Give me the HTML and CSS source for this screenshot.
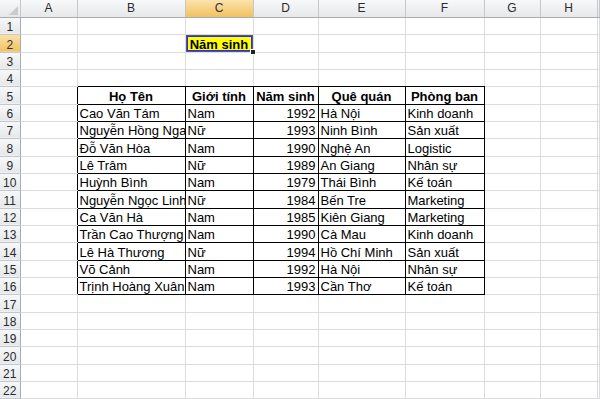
FILE: index.html
```html
<!DOCTYPE html>
<html lang="vi">
<head>
    <meta charset="UTF-8">
    <meta name="viewport" content="width=device-width, initial-scale=1.0">
    <title>Danh sách nhân viên</title>
    <link rel="stylesheet" href="styles.css">
</head>
<body>

<!-- Sheet grid -->
<table class="sheet">
    <colgroup>
        <col class="w-rh">
        <col class="w-a">
        <col class="w-b">
        <col class="w-c">
        <col class="w-d">
        <col class="w-e">
        <col class="w-f">
        <col class="w-g">
        <col class="w-h">
        <col>
    </colgroup>

    <!-- Column headers -->
    <tr class="hdr">
        <th class="corner"></th>
        <th>A</th>
        <th>B</th>
        <th class="sel">C</th>
        <th>D</th>
        <th>E</th>
        <th>F</th>
        <th>G</th>
        <th>H</th>
        <th></th>
    </tr>

    <tr class="r17"><th class="rh">1</th><td></td><td></td><td></td><td></td><td></td><td></td><td></td><td></td><td></td></tr>
    <tr class="r18"><th class="rh sel">2</th><td></td><td></td><td class="active">Năm sinh</td><td></td><td></td><td></td><td></td><td></td><td></td></tr>
    <tr class="r17"><th class="rh">3</th><td></td><td></td><td></td><td></td><td></td><td></td><td></td><td></td><td></td></tr>
    <tr class="r17"><th class="rh">4</th><td></td><td class="tp"></td><td class="tp"></td><td class="tp"></td><td class="tp"></td><td class="tp"></td><td></td><td></td><td></td></tr>

    <!-- Data table B5:F16 -->
    <tr class="r18 head"><th class="rh">5</th><td class="l"></td><td class="t">Họ Tên</td><td class="t">Giới tính</td><td class="t">Năm sinh</td><td class="t">Quê quán</td><td class="t">Phòng ban</td><td></td><td></td><td></td></tr>
    <tr class="r17"><th class="rh">6</th><td class="l"></td><td class="t">Cao Văn Tám</td><td class="t">Nam</td><td class="t num">1992</td><td class="t">Hà Nội</td><td class="t">Kinh doanh</td><td></td><td></td><td></td></tr>
    <tr class="r17"><th class="rh">7</th><td class="l"></td><td class="t">Nguyễn Hồng Nga</td><td class="t">Nữ</td><td class="t num">1993</td><td class="t">Ninh Bình</td><td class="t">Sản xuất</td><td></td><td></td><td></td></tr>
    <tr class="r18"><th class="rh">8</th><td class="l"></td><td class="t">Đỗ Văn Hòa</td><td class="t">Nam</td><td class="t num">1990</td><td class="t">Nghệ An</td><td class="t">Logistic</td><td></td><td></td><td></td></tr>
    <tr class="r17"><th class="rh">9</th><td class="l"></td><td class="t">Lê Trâm</td><td class="t">Nữ</td><td class="t num">1989</td><td class="t">An Giang</td><td class="t">Nhân sự</td><td></td><td></td><td></td></tr>
    <tr class="r17"><th class="rh">10</th><td class="l"></td><td class="t">Huỳnh Bình</td><td class="t">Nam</td><td class="t num">1979</td><td class="t">Thái Bình</td><td class="t">Kế toán</td><td></td><td></td><td></td></tr>
    <tr class="r18"><th class="rh">11</th><td class="l"></td><td class="t">Nguyễn Ngọc Linh</td><td class="t">Nữ</td><td class="t num">1984</td><td class="t">Bến Tre</td><td class="t">Marketing</td><td></td><td></td><td></td></tr>
    <tr class="r17"><th class="rh">12</th><td class="l"></td><td class="t">Ca Văn Hà</td><td class="t">Nam</td><td class="t num">1985</td><td class="t">Kiên Giang</td><td class="t">Marketing</td><td></td><td></td><td></td></tr>
    <tr class="r17"><th class="rh">13</th><td class="l"></td><td class="t">Trần Cao Thượng</td><td class="t">Nam</td><td class="t num">1990</td><td class="t">Cà Mau</td><td class="t">Kinh doanh</td><td></td><td></td><td></td></tr>
    <tr class="r18"><th class="rh">14</th><td class="l"></td><td class="t">Lê Hà Thương</td><td class="t">Nữ</td><td class="t num">1994</td><td class="t">Hồ Chí Minh</td><td class="t">Sản xuất</td><td></td><td></td><td></td></tr>
    <tr class="r17"><th class="rh">15</th><td class="l"></td><td class="t">Võ Cảnh</td><td class="t">Nam</td><td class="t num">1992</td><td class="t">Hà Nội</td><td class="t">Nhân sự</td><td></td><td></td><td></td></tr>
    <tr class="r17"><th class="rh">16</th><td class="l"></td><td class="t">Trịnh Hoàng Xuân</td><td class="t">Nam</td><td class="t num">1993</td><td class="t">Cần Thơ</td><td class="t">Kế toán</td><td></td><td></td><td></td></tr>

    <tr class="r18"><th class="rh">17</th><td></td><td></td><td></td><td></td><td></td><td></td><td></td><td></td><td></td></tr>
    <tr class="r17"><th class="rh">18</th><td></td><td></td><td></td><td></td><td></td><td></td><td></td><td></td><td></td></tr>
    <tr class="r17"><th class="rh">19</th><td></td><td></td><td></td><td></td><td></td><td></td><td></td><td></td><td></td></tr>
    <tr class="r18"><th class="rh">20</th><td></td><td></td><td></td><td></td><td></td><td></td><td></td><td></td><td></td></tr>
    <tr class="r17"><th class="rh">21</th><td></td><td></td><td></td><td></td><td></td><td></td><td></td><td></td><td></td></tr>
    <tr class="r17"><th class="rh">22</th><td></td><td></td><td></td><td></td><td></td><td></td><td></td><td></td><td></td></tr>
</table>

</body>
</html>
```

FILE: styles.css
```css
/* Spreadsheet look, Excel 2010 style */
body {
    margin: 0;
    background-color: #fff;
    font-family: "Liberation Sans", Arial, sans-serif;
    font-size: 13px;
    color: #000;
    overflow: hidden;
}

.sheet {
    width: 600px;
    border-collapse: collapse;
    table-layout: fixed;
}

.w-rh { width: 20px; }
.w-a  { width: 57px; }
.w-b  { width: 108px; }
.w-c  { width: 68px; }
.w-d  { width: 65px; }
.w-e  { width: 87px; }
.w-f  { width: 79px; }
.w-g  { width: 56px; }
.w-h  { width: 57px; }

.r17 { height: 17px; }
.r18 { height: 18px; }

/* Plain cells */
.sheet td {
    padding: 0 2px;
    border: none;
    border-right: 1px solid #dadcdd;
    border-bottom: 1px solid #dadcdd;
    white-space: nowrap;
    overflow: hidden;
    vertical-align: bottom;
    line-height: 15px;
}

/* Headers */
.sheet th {
    padding: 0;
    font-weight: normal;
    font-size: 12px;
    color: #2b2b2b;
    background: linear-gradient(#f7f8f9, #e5e7ea);
    border: none;
    border-right: 1px solid #c4c7cc;
    border-bottom: 1px solid #c4c7cc;
    text-align: center;
    white-space: nowrap;
    overflow: hidden;
}

.hdr {
    height: 17px;
}

.hdr th {
    border-bottom: 1px solid #a9adb3;
}

.sheet th.rh {
    border-right: 1px solid #a9adb3;
    font-size: 12px;
    line-height: 14px;
    vertical-align: bottom;
}

.sheet th.sel {
    background: linear-gradient(#fbe3ad, #f1c15f);
    color: #333;
}

.corner {
    position: relative;
}

.corner::after {
    content: "";
    position: absolute;
    right: 2px;
    bottom: 2px;
    border-style: solid;
    border-width: 0 0 9px 9px;
    border-color: transparent transparent #c9cbcf transparent;
}

/* Table B5:F16 */
.sheet td.t {
    border-right: 1px solid #000;
    border-bottom: 1px solid #000;
}

.sheet td.l {
    border-right: 1px solid #000;
}

.sheet td.tp {
    border-bottom: 1px solid #000;
}

.head td.t {
    font-weight: bold;
    text-align: center;
}

.num {
    text-align: right;
}

/* Active cell C2 */
.sheet td.active {
    position: relative;
    overflow: visible;
    background-color: #ffff00;
    font-weight: bold;
    text-align: center;
    box-shadow: inset 0 0 0 1px #5a5a6a, inset 0 0 0 2px #2a2aff;
}

.active::after {
    content: "";
    position: absolute;
    right: -3px;
    bottom: -3px;
    width: 4px;
    height: 4px;
    background-color: #222;
    border: 1px solid #fff;
}
```
